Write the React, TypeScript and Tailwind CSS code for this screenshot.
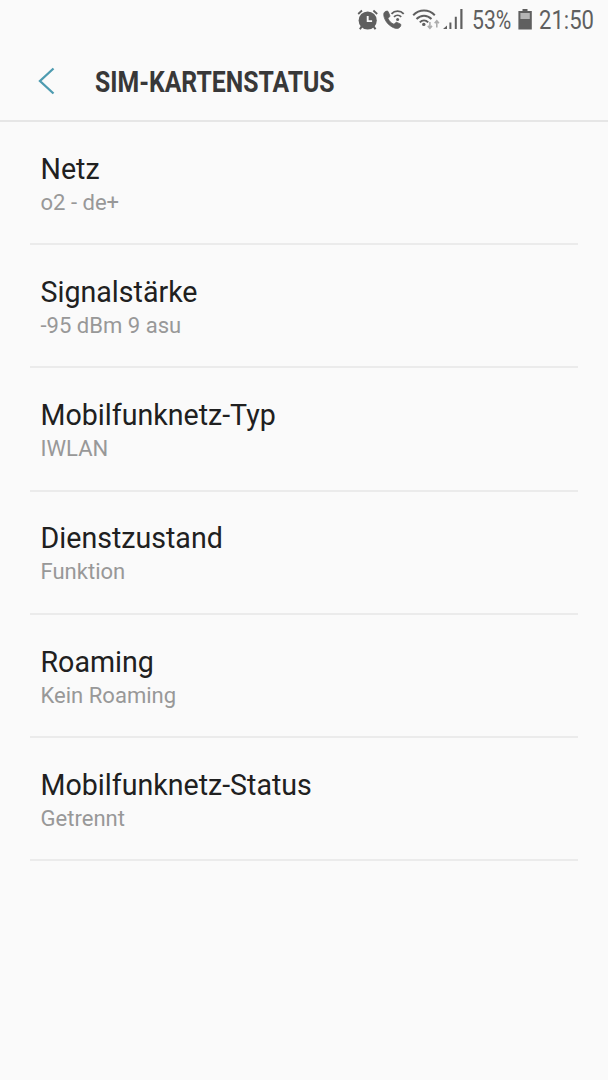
import React from 'react';

const entries = [
  { title: 'Netz', value: 'o2 - de+' },
  { title: 'Signalstärke', value: '-95 dBm 9 asu' },
  { title: 'Mobilfunknetz-Typ', value: 'IWLAN' },
  { title: 'Dienstzustand', value: 'Funktion' },
  { title: 'Roaming', value: 'Kein Roaming' },
  { title: 'Mobilfunknetz-Status', value: 'Getrennt' },
];

const AlarmIcon: React.FC = () => (
  <svg width="22" height="22" viewBox="0 0 22 22" fill="none" stroke="#5f5f5f">
    <circle cx="10.7" cy="11.5" r="9.1" fill="#5f5f5f" stroke="none" />
    <path d="M1.2 5 5 1.5M16.4 1.5 20.2 5" strokeWidth="1.8" />
    <path d="m4.6 17.6-1.7 2.7M16.8 17.6l1.7 2.7" strokeWidth="2" />
    <path d="M10.7 7v5.1h4.4" stroke="#fafafa" strokeWidth="1.9" />
  </svg>
);

const WifiCallIcon: React.FC = () => (
  <svg width="22" height="22" viewBox="0 0 22 22" fill="none" stroke="#5f5f5f">
    <path
      d="M1.5 3.2C2.2 2.5 3.3 2 4.3 2.1c.5 0 .8.3 1 .8l1.5 3.6c.2.5.1.9-.3 1.3L5 9.3c1.2 3 3 4.8 6 6l1.6-1.6c.4-.4.8-.5 1.3-.3l3.3 1.5c.5.2.8.6.7 1.1-.2 1.3-1.2 2.7-2.5 3.2-2.6.9-7-1-10.3-4.3C1.7 11.5-.5 5.3 1.5 3.2Z"
      fill="#5f5f5f"
      stroke="#5f5f5f"
      strokeWidth="0.8"
    />
    <path d="M8.5 4.9c3.3-3.6 8.9-3.6 12.2 0M11 7.8c2-2 5.2-2 7.2 0" strokeWidth="1.8" />
    <circle cx="14.6" cy="10.4" r="1.5" fill="#5f5f5f" stroke="none" />
  </svg>
);

const WifiIcon: React.FC = () => (
  <svg width="28" height="22" viewBox="0 0 28 22" fill="none" stroke="#5f5f5f">
    <path d="M1.2 6.2c6.1-6.3 15.5-6.3 21.6 0M4.5 10c4.4-4.4 10.6-4.4 15 0M7.8 13.4c2.4-2.4 6-2.4 8.4 0" strokeWidth="2" />
    <circle cx="11.8" cy="15.4" r="1.7" fill="#5f5f5f" stroke="none" />
    <path d="M17.9 13v6.3m-2.1-2.4 2.1 2.4 2.1-2.4M24.8 18.5v-6.8m-2.1 2.6 2.1-2.6 2.1 2.6" stroke="#adadad" strokeWidth="1.6" />
  </svg>
);

const SignalIcon: React.FC = () => (
  <svg width="22" height="22" viewBox="0 0 22 22" fill="#5f5f5f">
    <path d="M0 20 4 16.5V20ZM6.4 13.4h2V20h-2ZM11.8 7.8h2V20h-2ZM17.3 0h2.2v20h-2.2Z" />
  </svg>
);

const BatteryIcon: React.FC = () => (
  <svg width="15" height="22" viewBox="0 0 15 22">
    <path d="M4.5 0h5v2h4.3v18.5H.4V2h4.1Z" fill="#5f5f5f" />
    <path d="M2.4 4h9.4v6H2.4Z" fill="#b5b5b5" />
  </svg>
);

const StatusBar: React.FC = () => (
  <div className="flex h-[42px] items-start justify-end pr-[13px] pt-[9px] text-[25.5px] leading-[22px] text-[#5f5f5f]">
    <div className="mr-[4px]"><AlarmIcon /></div>
    <div className="mr-[7px]"><WifiCallIcon /></div>
    <div className="mr-[3px]"><WifiIcon /></div>
    <div className="mr-[7px]"><SignalIcon /></div>
    <div className="mr-[6px] w-[40px] whitespace-nowrap">
      <span className="inline-block origin-left scale-x-[0.83]">53%</span>
    </div>
    <div className="mr-[6px]"><BatteryIcon /></div>
    <div className="w-[56px] whitespace-nowrap">
      <span className="inline-block origin-left scale-x-[0.865]">21:50</span>
    </div>
  </div>
);

const App: React.FC = () => {
  return (
    <div className="h-[1080px] w-[608px] overflow-hidden bg-[#fafafa] font-['Roboto',sans-serif]">
      <StatusBar />
      <header className="flex h-20 items-center border-b-2 border-[#e6e6e6] pl-[38px]">
        <svg width="18" height="28" viewBox="0 0 18 28" fill="none" stroke="#4d9bb0" strokeWidth="2.3">
          <path d="M15.5 1.5 2 14l13.5 12.5" />
        </svg>
        <h1 className="ml-[39px] origin-left scale-x-[0.86] whitespace-nowrap pt-[2px] text-[28.8px] font-bold leading-8 text-[#383838]">
          SIM-KARTENSTATUS
        </h1>
      </header>
      <ul className="px-[30px]">
        {entries.map((entry) => (
          <li key={entry.title} className="h-[123.2px] border-b-2 border-[#ebebeb] pl-[10.5px] pt-[29.8px]">
            <div className="text-[28.6px] leading-[34px] text-[#202020]">{entry.title}</div>
            <div className="text-[22.05px] leading-[33px] text-[#989898]">{entry.value}</div>
          </li>
        ))}
      </ul>
    </div>
  );
};

export default App;
